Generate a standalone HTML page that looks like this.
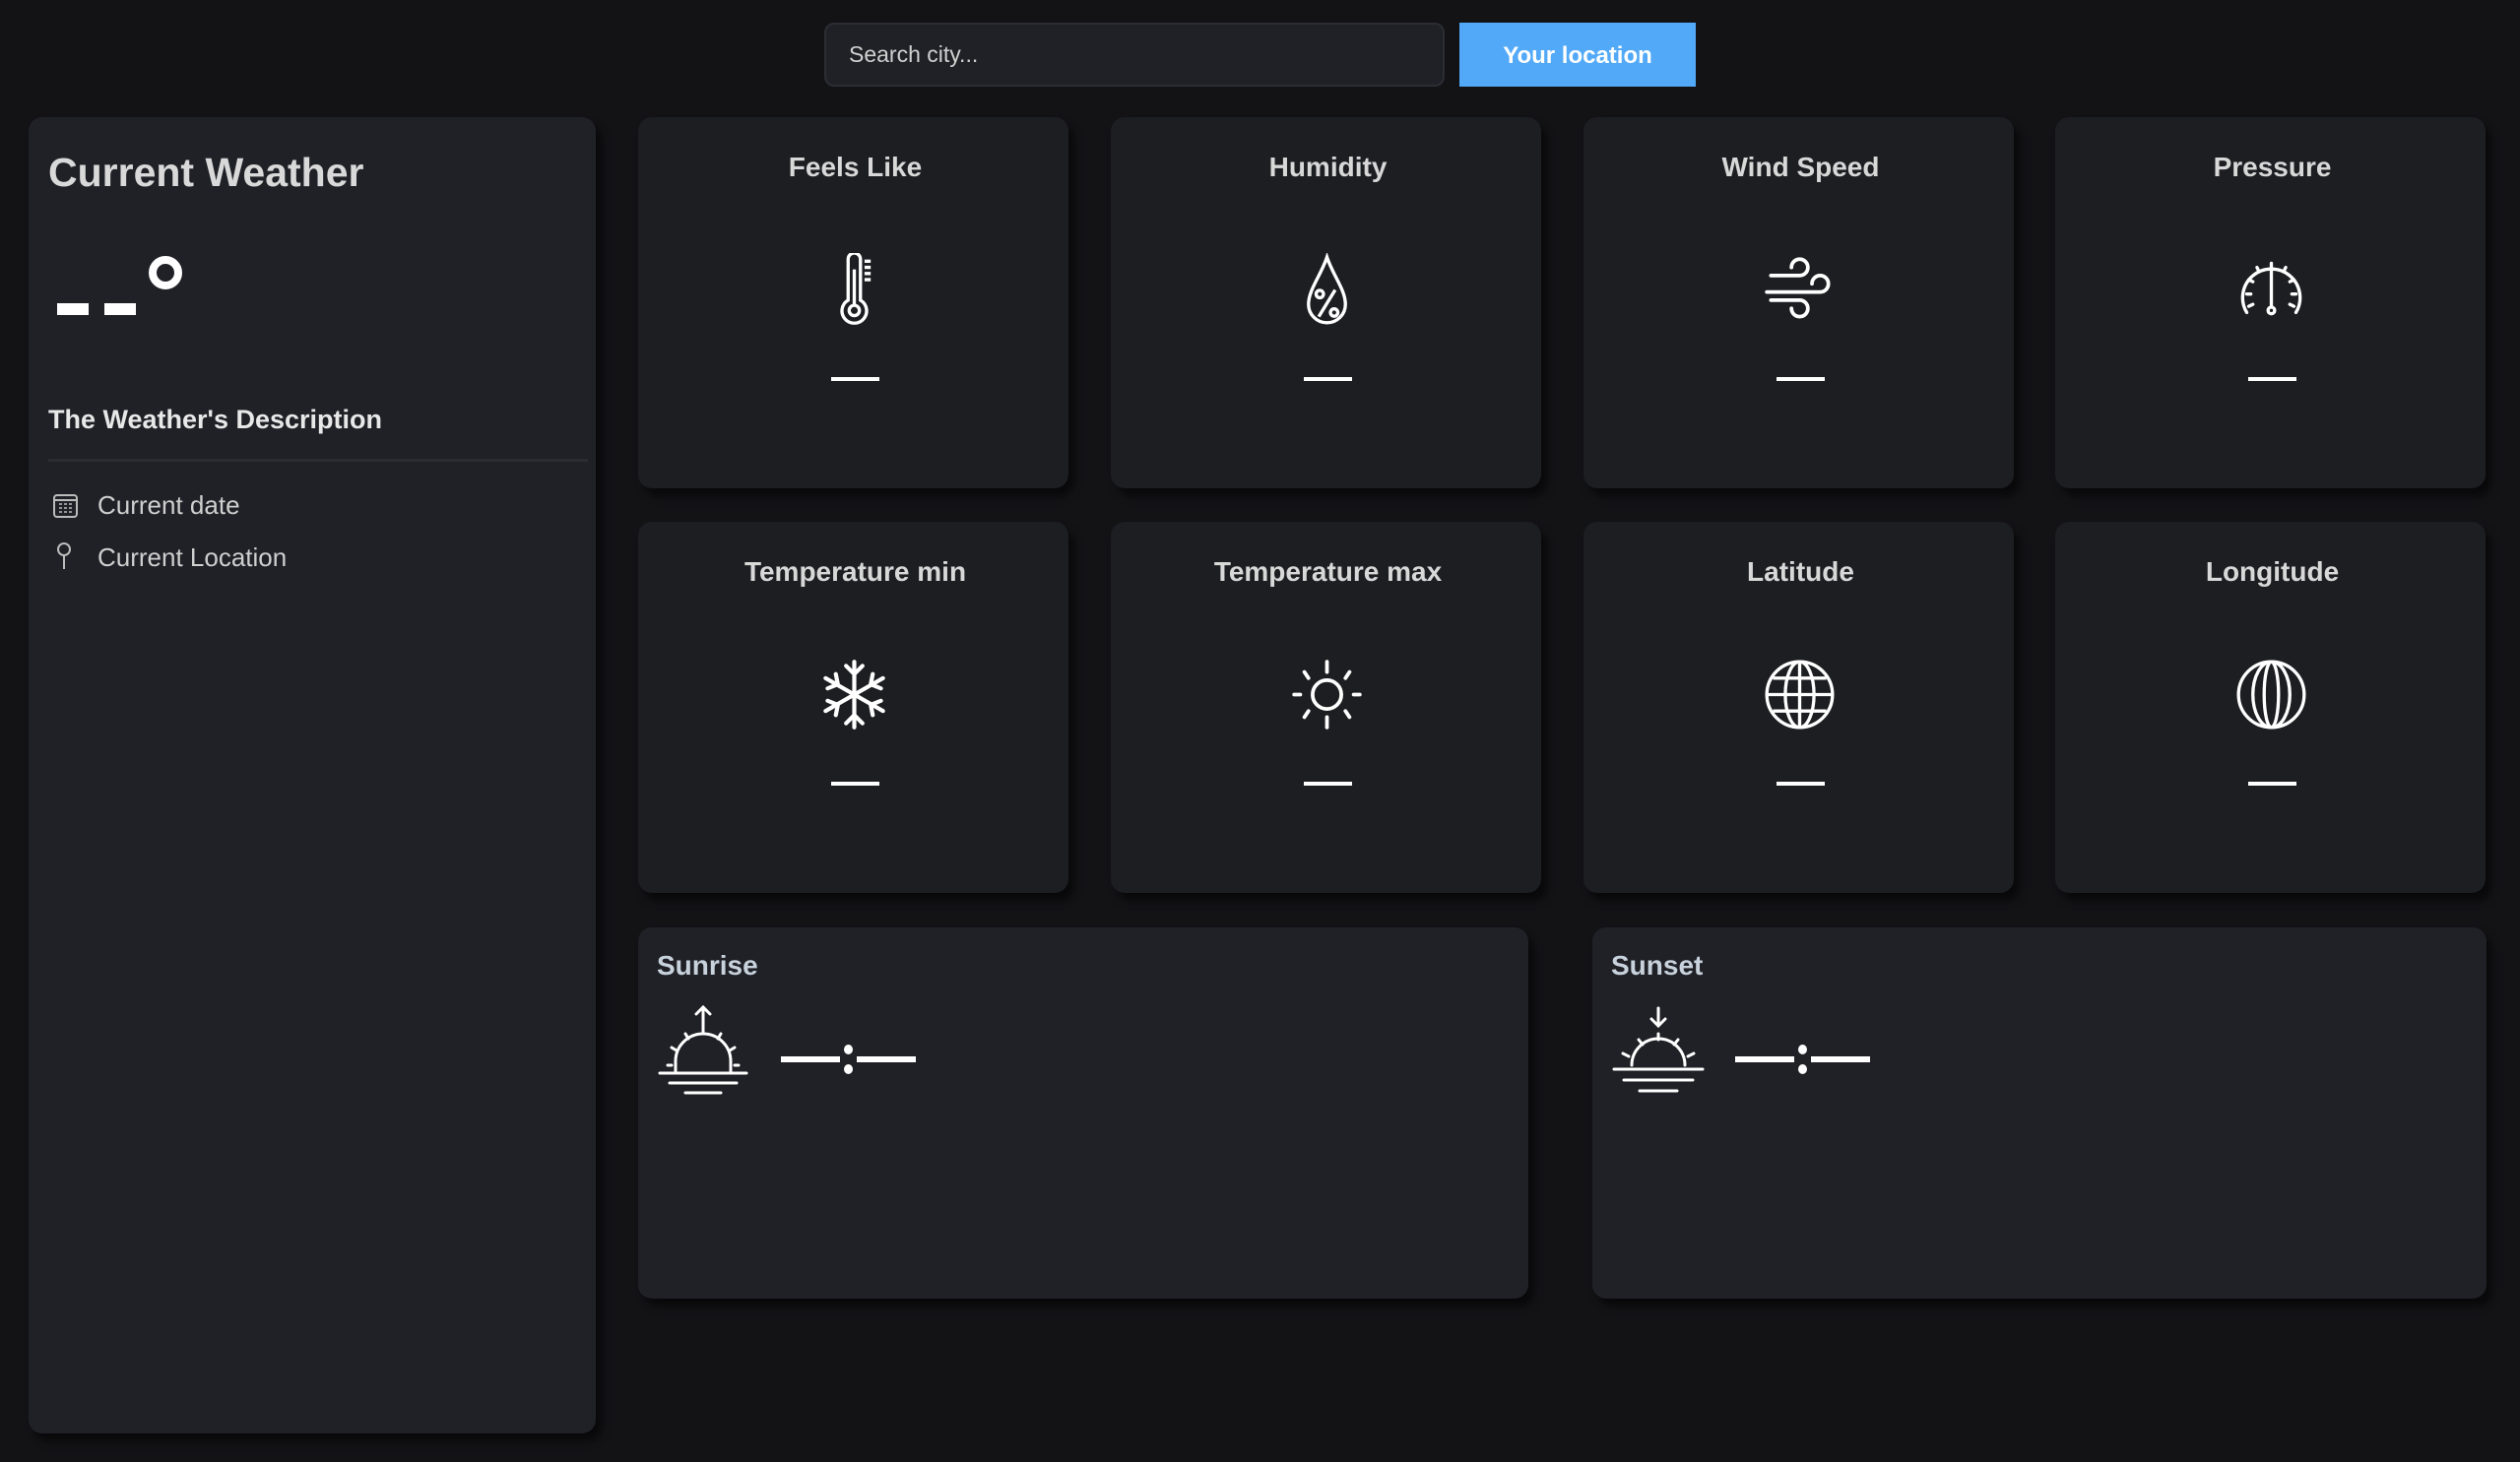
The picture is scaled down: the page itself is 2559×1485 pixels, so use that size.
<!DOCTYPE html>
<html><head><meta charset="utf-8"><style>
*{margin:0;padding:0;box-sizing:border-box}
body{width:2559px;height:1485px;background:#131316;font-family:"Liberation Sans",sans-serif;color:#e6e6e6;position:relative;overflow:hidden}
.abs{position:absolute}
.panel{background:#202127;border-radius:14px;box-shadow:6px 8px 8px rgba(0,0,0,.55)}
.card{position:absolute;width:437px;height:377px;background:#1d1e22;border-radius:14px;box-shadow:6px 8px 8px rgba(0,0,0,.55)}
.card h3{position:absolute;left:0;width:100%;text-align:center;font-size:28px;font-weight:bold;color:#d8d8d8;top:35px;padding-left:4px}
.card svg{position:absolute;left:182px;top:138px}
.card .d{position:absolute;left:196px;top:264px;width:49px;height:4px;background:#fff}
.big{position:absolute;width:904px;height:377px;background:#202127;border-radius:14px;box-shadow:6px 8px 8px rgba(0,0,0,.55)}
.big h3{position:absolute;left:19px;top:23px;font-size:28px;font-weight:bold;color:#c8d2dc}
.tm{position:absolute;top:131px;left:145px;width:137px;height:6px}
.tm i{position:absolute;top:0;height:6px;width:60px;background:#fff}
.tm b{position:absolute;left:64px;width:9px;height:10px;border-radius:50%;background:#fff}
</style></head><body>
<div class="abs" style="left:837px;top:23px;width:630px;height:65px;background:#202127;border:2px solid #2c2d33;border-radius:10px"></div>
<div class="abs" style="left:862px;top:42px;font-size:23px;color:#d0d0d0">Search city...</div>
<div class="abs" style="left:1482px;top:23px;width:240px;height:65px;background:#52a9f7;color:#fff;font-weight:bold;font-size:24px;text-align:center;line-height:67px">Your location</div>

<div class="abs panel" style="left:29px;top:119px;width:576px;height:1337px"></div>
<div class="abs" style="left:49px;top:152px;font-size:41px;font-weight:bold;color:#d9d9d9">Current Weather</div>
<div class="abs" style="left:58px;top:308px;width:32px;height:12px;background:#fff"></div>
<div class="abs" style="left:106px;top:308px;width:32px;height:12px;background:#fff"></div>
<div class="abs" style="left:151px;top:260px;width:34px;height:34px;border:8px solid #fff;border-radius:50%"></div>
<div class="abs" style="left:49px;top:411px;font-size:27px;font-weight:bold;color:#e8e8e8">The Weather's Description</div>
<div class="abs" style="left:49px;top:466px;width:548px;height:3px;background:#2b2c32"></div>
<svg class="abs" style="left:53px;top:500px" width="27" height="27" viewBox="0 0 27 27" fill="none" stroke="#bbb" stroke-width="2"><rect x="2" y="3" width="23" height="22" rx="3"/><line x1="2" y1="8" x2="25" y2="8"/><g stroke-width="1.6"><path d="M7 12h3M12 12h3M17 12h3M7 16h3M12 16h3M17 16h3M7 20h3M12 20h3M17 20h3"/></g></svg>
<div class="abs" style="left:99px;top:498px;font-size:26px;color:#cfcfcf">Current date</div>
<svg class="abs" style="left:56px;top:550px" width="18" height="30" viewBox="0 0 18 30" fill="none" stroke="#bbb" stroke-width="2"><circle cx="9" cy="8" r="6"/><line x1="9" y1="14" x2="9" y2="28"/></svg>
<div class="abs" style="left:99px;top:551px;font-size:26px;color:#cfcfcf">Current Location</div>

<div class="card" style="left:648px;top:119px"><h3>Feels Like</h3>
<svg width="75" height="75" viewBox="2 2 36 36" fill="none" stroke="#fff" stroke-width="1.6"><path d="M17 5a3 3 0 0 1 6 0v20a6 6 0 1 1-6 0z"/><circle cx="20" cy="30" r="2.5"/><line x1="20" y1="10" x2="20" y2="27"/><path d="M25 6h3M25 9h3M25 12h3M25 15h3"/></svg><div class="d"></div></div>
<div class="card" style="left:1128px;top:119px"><h3>Humidity</h3>
<svg width="75" height="75" viewBox="2 2 36 36" fill="none" stroke="#fff" stroke-width="1.6"><path d="M20 4C17 13 11 20 11 27a9 9 0 0 0 18 0c0-7-6-14-9-23z"/><line x1="16" y1="33" x2="24" y2="20"/><circle cx="16.5" cy="22" r="1.8"/><circle cx="23.5" cy="31" r="1.8"/></svg><div class="d"></div></div>
<div class="card" style="left:1608px;top:119px"><h3>Wind Speed</h3>
<svg width="75" height="75" viewBox="2 2 36 36" fill="none" stroke="#fff" stroke-width="1.8" stroke-linecap="round"><path d="M6 13h14a4 4 0 1 0-4-4"/><path d="M4 21h26a4 4 0 1 0-4-4"/><path d="M6 25h14a4 4 0 1 1-4 4"/></svg><div class="d"></div></div>
<div class="card" style="left:2087px;top:119px"><h3>Pressure</h3>
<svg width="75" height="75" viewBox="2 2 36 36" fill="none" stroke="#fff" stroke-width="1.6" stroke-linecap="round"><path d="M8 31A14 14 0 1 1 32 31"/><path d="M20 11v17"/><circle cx="20" cy="30" r="1.6"/><path d="M20 7v2M13 9l1 2M27 9l-1 2M9 15l2 1M31 15l-2 1M8 22h2M32 22h-2M9 28l2-1M31 28l-2-1"/></svg><div class="d"></div></div>

<div class="card" style="left:648px;top:530px"><h3>Temperature min</h3>
<svg width="75" height="75" viewBox="2 2 36 36" fill="none" stroke="#fff" stroke-width="2" stroke-linecap="round"><path d="M20 4v32M6 12l28 16M6 28l28-16"/><path d="M16 6l4 4 4-4M16 34l4-4 4 4M7 17l5-2-1-5M33 23l-5 2 1 5M7 23l5 2-1 5M33 17l-5-2 1-5"/></svg><div class="d"></div></div>
<div class="card" style="left:1128px;top:530px"><h3>Temperature max</h3>
<svg width="75" height="75" viewBox="2 2 36 36" fill="none" stroke="#fff" stroke-width="1.8" stroke-linecap="round"><circle cx="20" cy="20" r="7"/><path d="M20 4v5M20 31v5M4 20h3M33 20h3M9 9l2 3M31 9l-2 3M9 31l2-3M31 31l-2-3"/></svg><div class="d"></div></div>
<div class="card" style="left:1608px;top:530px"><h3>Latitude</h3>
<svg width="75" height="75" viewBox="2 2 36 36" fill="none" stroke="#fff" stroke-width="1.6"><circle cx="20" cy="20" r="16"/><ellipse cx="20" cy="20" rx="7" ry="16"/><path d="M20 4v32M4 20h32M7 12h26M7 28h26"/></svg><div class="d"></div></div>
<div class="card" style="left:2087px;top:530px"><h3>Longitude</h3>
<svg width="75" height="75" viewBox="2 2 36 36" fill="none" stroke="#fff" stroke-width="1.6"><circle cx="20" cy="20" r="16"/><ellipse cx="20" cy="20" rx="9" ry="16"/><ellipse cx="20" cy="20" rx="3.5" ry="16"/></svg><div class="d"></div></div>

<div class="big" style="left:648px;top:942px"><h3>Sunrise</h3>
<svg class="abs" style="left:18px;top:78px" width="96" height="98" viewBox="0 0 96 98" fill="none" stroke="#fff" stroke-width="3" stroke-linecap="round"><path d="M48 23V3M41 10l7-7 7 7"/><path d="M20 68V58a28 28 0 0 1 56 0v10"/><path d="M48 24v6M30 30l3 5M66 30l-3 5M16 44l5 3M80 44l-5 3M12 62h4M84 62h-4"/><path d="M4 70h88M14 80h68M30 90h36"/></svg>
<div class="tm"><i style="left:0"></i><b style="top:-12px"></b><b style="top:8px"></b><i style="left:77px"></i></div></div>
<div class="big" style="left:1617px;top:942px;width:908px"><h3>Sunset</h3>
<svg class="abs" style="left:18px;top:78px" width="98" height="98" viewBox="0 0 98 98" fill="none" stroke="#fff" stroke-width="3" stroke-linecap="round"><path d="M49 4v18M42 15l7 7 7-7"/><path d="M22 62a27 27 0 0 1 54 0"/><path d="M49 30v6M29 36l4 5M69 36l-4 5M13 50l6 3M85 50l-6 3"/><path d="M4 66h90M14 77h70M30 88h38"/></svg>
<div class="tm"><i style="left:0"></i><b style="top:-12px"></b><b style="top:8px"></b><i style="left:77px"></i></div></div>
</body></html>
